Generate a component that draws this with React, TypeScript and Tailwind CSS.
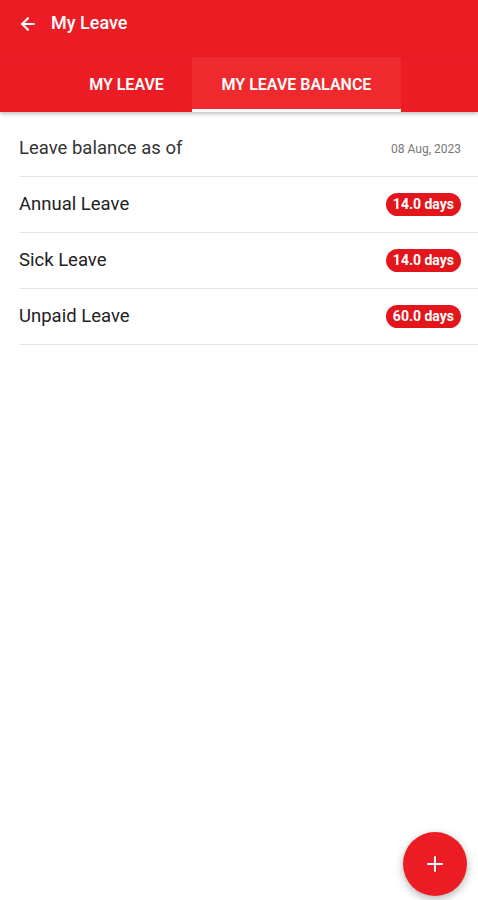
import { ArrowLeft, Plus } from "lucide-react";

const rows = [
  { label: "Annual Leave", days: "14.0 days" },
  { label: "Sick Leave", days: "14.0 days" },
  { label: "Unpaid Leave", days: "60.0 days" },
];

export default function App() {
  return (
    <div className="relative h-[900px] w-[478px] overflow-hidden bg-white font-['Roboto',sans-serif]">
      {/* Toolbar */}
      <div className="flex h-[57px] items-start bg-[#ec1c24] pl-[18px] pt-[12px] text-white">
        <ArrowLeft className="mt-[2px] h-[20px] w-[20px]" strokeWidth={2.5} />
        <span className="ml-[13px] text-[18px] font-medium leading-[22px]">My Leave</span>
      </div>

      {/* Tabs */}
      <div className="relative z-10 flex h-[55px] bg-[#ec1c24] shadow-[0_2px_4px_rgba(0,0,0,0.25)]">
        <div className="ml-[61px] flex w-[131px] items-center justify-center pt-[1px] text-[16px] font-semibold text-white">
          MY LEAVE
        </div>
        <div className="flex w-[209px] flex-col bg-[#ef2a2e]">
          <div className="flex flex-1 items-center justify-center pt-[4px] text-[16px] font-semibold text-white">
            MY LEAVE BALANCE
          </div>
          <div className="h-[3px] bg-white" />
        </div>
      </div>

      {/* List */}
      <div className="pl-[19px]">
        <div className="flex h-[65px] items-center justify-between border-b border-[#e6e6e6] pr-[17px] pt-[9px]">
          <span className="text-[18.5px] text-[#333]">Leave balance as of</span>
          <span className="text-[12px] text-[#777]">08 Aug, 2023</span>
        </div>
        {rows.map((r) => (
          <div
            key={r.label}
            className="flex h-[56px] items-center justify-between border-b border-[#e6e6e6] pr-[17px]"
          >
            <span className="text-[18.5px] text-[#222]">{r.label}</span>
            <span className="flex h-[23px] items-center rounded-full bg-[#e3161d] px-[7px] text-[14px] font-bold text-white">
              {r.days}
            </span>
          </div>
        ))}
      </div>

      {/* FAB */}
      <button className="absolute bottom-[4px] right-[11px] flex h-[64px] w-[64px] items-center justify-center rounded-full bg-[#ec1c24] text-white shadow-[0_3px_8px_rgba(0,0,0,0.3)]">
        <Plus className="h-[24px] w-[24px]" strokeWidth={2} />
      </button>
    </div>
  );
}
